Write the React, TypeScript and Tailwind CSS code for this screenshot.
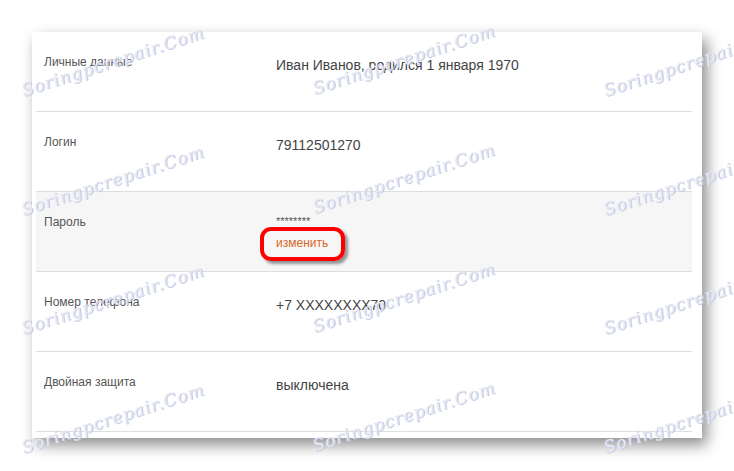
import React from "react";

const rows = [
  { label: "Личные данные", value: "Иван Иванов, родился 1 января 1970" },
  { label: "Логин", value: "79112501270" },
  { label: "Пароль", value: "", password: true },
  { label: "Номер телефона", value: "+7 XXXXXXXX70" },
  { label: "Двойная защита", value: "выключена" },
];

// watermark centres (x, y) over the whole page
const marks: [number, number][] = [];
[0, 1, 2, 3].forEach((r) => {
  [0, 1, 2].forEach((c) => {
    marks.push([113 + c * 291, 62 + r * 119 - (c === 1 ? 2 : 0)]);
  });
});

const App = () => {
  return (
    <div className="relative w-[734px] h-[471px] bg-white overflow-hidden font-['Liberation_Sans',Arial,sans-serif]">
      <div className="pt-[32px] pl-[32px]">
        <div className="w-[670px] h-[406px] bg-white pl-1 pr-[10px] shadow-[5px_7px_14px_rgba(0,0,0,0.45)]">
          {rows.map((row) => (
            <div
              key={row.label}
              className={`flex h-20 border-b border-[#dedede] ${row.password ? "bg-[#f6f6f6]" : ""}`}
            >
              <div className="w-[240px] pl-2 pt-[22px] text-[12px] leading-4 text-[#555]">
                {row.label}
              </div>
              {row.password ? (
                <div className="pt-[22px]">
                  <div className="text-[11px] leading-[14px] text-[#555]">********</div>
                  <div className="relative mt-[7px] text-[12px] leading-4 text-[#d8682b]">
                    изменить
                    <span className="absolute left-[-16px] top-[-8px] w-[85px] h-[34px] rounded-[11px] border-4 border-[#ff0000] shadow-[3px_3px_3px_rgba(0,0,0,0.4)]"></span>
                  </div>
                </div>
              ) : (
                <div className="pt-[23px] text-[14px] leading-5 text-[#444]">{row.value}</div>
              )}
            </div>
          ))}
        </div>
      </div>

      {marks.map(([x, y], i) => (
        <div
          key={i}
          className="pointer-events-none absolute whitespace-nowrap text-[17px] italic tracking-[1px] text-[#e6e8f4] font-['DejaVu_Serif',serif] [text-shadow:1px_1px_0_#c3c8e2]"
          style={{ left: x, top: y, transform: "translate(-50%, -50%) rotate(-18deg)" }}
        >
          Soringpcrepair.Com
        </div>
      ))}
    </div>
  );
};

export default App;
